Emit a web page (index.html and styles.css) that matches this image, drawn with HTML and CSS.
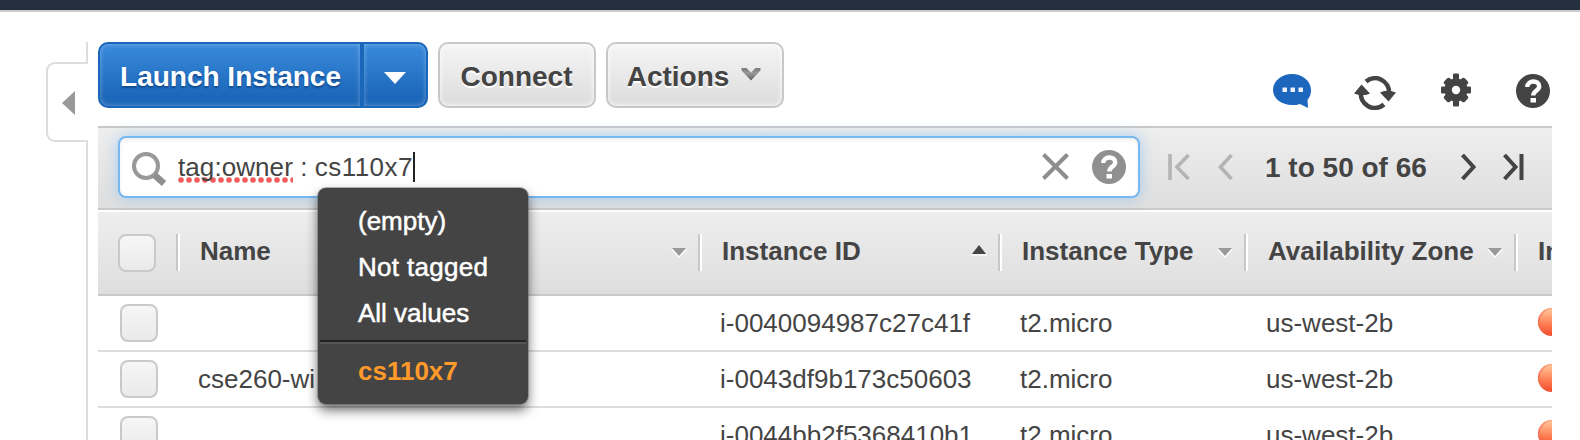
FILE: index.html
```html
<!DOCTYPE html>
<html lang="en">
<head>
<meta charset="utf-8">
<title>Instances</title>
<link rel="stylesheet" href="styles.css">
</head>
<body>
<div class="page">
  <header class="topbar"></header>
  <div class="layout">
    <aside class="side">
      <div class="side-top"></div>
      <div class="side-tab"><svg width="13" height="24" viewBox="0 0 13 24"><path d="M13 0v24L0 12z" fill="#999"/></svg></div>
      <div class="side-rest"></div>
    </aside>
    <main class="main">
      <div class="toolbar">
        <div class="split">
          <button class="btn launch">Launch Instance</button>
          <button class="btn launch-more"><svg width="22" height="12" viewBox="0 0 22 12"><path d="M0 0h22L11 12z" fill="#fff"/></svg></button>
        </div>
        <button class="btn plain connect">Connect</button>
        <button class="btn plain actions">Actions
          <svg width="20" height="14" viewBox="0 0 20 14"><defs><linearGradient id="chev" x1="0" y1="0" x2="0" y2="1"><stop offset="0" stop-color="#777"/><stop offset=".4" stop-color="#999"/><stop offset="1" stop-color="#606060"/></linearGradient></defs><path d="M.5 1h5L10 5.500l4.500-4.500h5v2.500L10 13.500.5 3.500z" fill="url(#chev)"/></svg>
        </button>
        <div class="tools">
          <svg class="t-chat" width="38" height="36" viewBox="0 0 38 36"><path d="M19 1c10.500 0 19 7 19 16 0 4-1 7-3.500 10l.5 8-8-4c-2.500 1-5 1-8 1C8.500 32 0 25.500 0 17 0 8 8.500 1 19 1z" fill="#1c66bd"/><path d="M9.500 14.500h4.500v4.500H9.500zm8 0h4.500v4.500h-4.500zm8 0h4.500v4.500h-4.500z" fill="#fff" opacity=".9"/></svg>
          <svg class="t-refresh" width="42" height="34" viewBox="0 0 42 34"><g fill="none" stroke="#444" stroke-width="4.600"><path d="M12 5.500A14 14 0 0 1 35 17"/><path d="M30 28.500A14 14 0 0 1 7 16"/></g><path d="M26 16.500l4-1.500h7l5 1.500-7.500 9zM0 17.500L7.500 8.500l8.500 9-4 1.500H5z" fill="#444"/></svg>
          <svg class="t-gear" width="30" height="34" viewBox="-15 -17 30 34"><g fill="#444"><circle r="11.500"/><rect x="-3" y="-16.500" width="6" height="33" rx="1"/><rect x="-15" y="-3.500" width="30" height="7" rx="1"/><rect x="-4" y="-14.500" width="8" height="29" rx="2" transform="rotate(45)"/><rect x="-4" y="-14.500" width="8" height="29" rx="2" transform="rotate(-45)"/></g><circle r="4.200" fill="#fff"/></svg>
          <svg class="t-help" width="34" height="34" viewBox="0 0 34 34"><circle cx="17" cy="17" r="17" fill="#444"/><path d="M11.200 13c.2-7.200 12-7.200 12-.8 0 4.500-6 4.600-6 9.300" fill="none" stroke="#fff" stroke-width="4.400"/><path d="M14.500 24h5.500v4.500h-5.500z" fill="#fff"/></svg>
        </div>
      </div>

      <div class="filterbar">
        <div class="search">
          <svg class="s-glass" width="35" height="35" viewBox="0 0 35 35"><circle cx="14" cy="14" r="12" fill="none" stroke="#999" stroke-width="4"/><path d="M22.500 23l9.500 8.500" stroke="#8f8f8f" stroke-width="6.500"/></svg>
          <div class="query"><span class="misspelt">tag:owner</span> : <span class="value">cs110x7</span></div><i class="caret"></i>
          <svg class="s-clear" width="27" height="27" viewBox="0 0 27 27"><path d="M1.500 1.500l24 24M25.500 1.500l-24 24" stroke="#8d8d8d" stroke-width="4"/></svg>
          <svg class="s-help" width="34" height="34" viewBox="0 0 34 34"><circle cx="17" cy="17" r="17" fill="#909090"/><path d="M11.200 13c.2-7.200 12-7.200 12-.8 0 4.500-6 4.600-6 9.300" fill="none" stroke="#fff" stroke-width="4.400"/><path d="M14.500 24h5.500v4.500h-5.500z" fill="#fff"/></svg>
          <ul class="menu">
            <li>(empty)</li>
            <li class="wide">Not tagged</li>
            <li>All values</li>
            <li class="rule"></li>
            <li class="match">cs110x7</li>
          </ul>
        </div>
        <div class="pager">
          <svg class="p-first" width="22" height="26" viewBox="0 0 22 26"><path d="M2 0v26M20.500 1L9 13l11.500 12" fill="none" stroke="#b4b4b4" stroke-width="3.600"/></svg>
          <svg class="p-prev" width="15" height="26" viewBox="0 0 15 26"><path d="M13.500 1L2.500 13l11 12" fill="none" stroke="#b4b4b4" stroke-width="3.600"/></svg>
          <span class="range">1 to 50 of 66</span>
          <svg class="p-next" width="15" height="26" viewBox="0 0 15 26"><path d="M1.500 1l11 12-11 12" fill="none" stroke="#444" stroke-width="4"/></svg>
          <svg class="p-last" width="21" height="26" viewBox="0 0 21 26"><path d="M1.500 1l11 12-11 12M18.500 0v26" fill="none" stroke="#444" stroke-width="4"/></svg>
        </div>
      </div>

      <div class="grid head">
        <div class="pick"><i class="check"></i></div>
        <div class="col">Name<svg class="sort" width="16" height="10" viewBox="0 0 16 10"><path d="M0 1h16L8 10z" fill="#fff"/><path d="M1 0h14L8 8z" fill="#999"/></svg></div>
        <div class="col">Instance ID<svg class="sort up" width="16" height="11" viewBox="0 0 16 11"><path d="M0 9h16v2H0z" fill="#f4f4f4"/><path d="M8 0l7 9H1z" fill="#444"/></svg></div>
        <div class="col">Instance Type<svg class="sort" width="16" height="10" viewBox="0 0 16 10"><path d="M0 1h16L8 10z" fill="#fff"/><path d="M1 0h14L8 8z" fill="#999"/></svg></div>
        <div class="col">Availability Zone<svg class="sort" width="16" height="10" viewBox="0 0 16 10"><path d="M0 1h16L8 10z" fill="#fff"/><path d="M1 0h14L8 8z" fill="#999"/></svg></div>
        <div class="col last">In</div>
      </div>
      <div class="grid row">
        <div class="pick"><i class="check"></i></div>
        <div></div><div>i-0040094987c27c41f</div><div>t2.micro</div><div>us-west-2b</div><div><i class="dot"></i></div>
      </div>
      <div class="grid row">
        <div class="pick"><i class="check"></i></div>
        <div>cse260-wi</div><div>i-0043df9b173c50603</div><div>t2.micro</div><div>us-west-2b</div><div><i class="dot"></i></div>
      </div>
      <div class="grid row">
        <div class="pick"><i class="check"></i></div>
        <div></div><div>i-0044bb2f5368410b1</div><div>t2.micro</div><div>us-west-2b</div><div><i class="dot"></i></div>
      </div>
    </main>
  </div>
</div>
</body>
</html>
```
FILE: styles.css
```css
* { box-sizing: border-box; }
body {
  margin: 0;
  background: #fff;
  color: #444;
  font: 26px/30px "Liberation Sans", Arial, sans-serif;
}
svg { display: block; flex: none; }
.page { width: 1580px; height: 440px; overflow: hidden; }
.topbar { height: 12px; background: #25303e; border-bottom: 2px solid #ccc; }
.layout { display: flex; padding: 30px 0 0 46px; }

/* collapsed side panel */
.side { width: 42px; height: 398px; display: flex; flex-direction: column; flex: none; }
.side-top { height: 20px; border-right: 2px solid #ddd; }
.side-tab {
  height: 80px;
  border: 2px solid #ddd;
  border-right: 0;
  border-radius: 9px 0 0 9px;
  padding: 27px 0 0 14px;
}
.side-rest { flex: 1; border-right: 2px solid #ddd; }

.main { width: 1454px; margin-left: 10px; flex: none; }

/* action buttons */
.toolbar { display: flex; height: 84px; align-items: flex-start; }
.btn {
  height: 66px;
  margin: 0;
  padding: 3px 0 0;
  font: bold 28px/32px "Liberation Sans", Arial, sans-serif;
  display: flex;
  align-items: center;
  justify-content: center;
}
.split { display: flex; }
.launch, .launch-more {
  color: #fff;
  border: 2px solid #1a66b8;
  background: linear-gradient(#398adb, #1c67b9 85%);
  box-shadow: inset 0 0 5px rgba(255, 255, 255, .35);
  text-shadow: 0 2px 2px #124a8c;
}
.launch { width: 264px; border-radius: 10px 0 0 10px; padding-left: 1px; }
.launch-more { width: 66px; border-radius: 0 10px 10px 0; padding-top: 6px; }
.plain {
  color: #444;
  border: 2px solid #c8c8c8;
  border-radius: 10px;
  background: linear-gradient(#f5f5f5, #dfdfdf 90%);
  box-shadow: inset 0 0 5px #fff;
  text-shadow: 0 2px 0 #fff;
}
.connect { width: 158px; margin-left: 10px; padding-right: 1px; }
.actions { width: 178px; margin-left: 10px; gap: 12px; padding-right: 2px; }
.actions svg { margin-top: -5px; }
.tools { display: flex; margin: 31px 0 0 auto; padding-right: 2px; }
.t-refresh { margin: 3px 0 0 43px; }
.t-gear { margin-left: 45px; }
.t-help { margin: 1px 0 0 45px; }

/* filter and paging */
.filterbar {
  display: flex;
  height: 84px;
  padding: 8px 0 0 20px;
  border-top: 2px solid #c9c9c9;
  border-bottom: 2px solid #c9c9c9;
  background: linear-gradient(#eee, #dedede);
}
.search {
  position: relative;
  z-index: 2;
  width: 1022px;
  height: 62px;
  display: flex;
  align-items: flex-start;
  border: 2px solid #76b8ef;
  border-radius: 8px;
  background: #fff;
  box-shadow: 0 0 14px rgba(105, 180, 245, .55), inset 0 2px 4px #eee;
}
.s-glass { margin: 14px 0 0 12px; }
.query { margin: 14px 0 0 11px; white-space: pre; letter-spacing: .08px; }
.value { letter-spacing: .45px; }
.misspelt {
  display: inline-block;
  height: 31px;
  background: radial-gradient(circle at 3px 3px, #f55b5b 2.200px, rgba(255, 100, 100, 0) 3.400px) 0 bottom / 8px 6px repeat-x;
}
.caret { width: 2px; height: 30px; margin: 14px 0 0 0; background: #222; }
.s-clear { margin: 15px 0 0 auto; }
.s-help { margin: 12px 12px 0 23px; }
.menu {
  position: absolute;
  left: 198px;
  top: 50px;
  width: 210px;
  height: 216px;
  margin: 0;
  padding: 18px 0 0;
  list-style: none;
  color: #fff;
  background: #444;
  border-radius: 8px;
  box-shadow: 0 0 0 1px rgba(110, 110, 110, .5), 0 6px 12px rgba(0, 0, 0, .6);
}
.menu li { height: 46px; padding-left: 40px; -webkit-text-stroke: .5px #fff; }
.menu .wide { letter-spacing: .3px; }
.menu .rule { height: 4px; margin: -4px 2px 0; padding: 0; border-top: 2px solid #222; background: #555; }
.menu .match { padding-top: 12px; color: #ff9a2b; font-weight: bold; -webkit-text-stroke: 0; }
.pager { display: flex; margin: 18px 0 0 28px; font: bold 28px/28px "Liberation Sans", Arial, sans-serif; }
.p-prev { margin-left: 28px; }
.range { width: 164px; margin: 0 0 0 32px; white-space: nowrap; }
.p-next { margin-left: 32px; }
.p-last { margin-left: 27px; }

/* instance table */
.grid { display: grid; grid-template-columns: 78px 522px 300px 246px 270px 38px; overflow: hidden; }
.head {
  height: 86px;
  padding-top: 24px;
  border-top: 2px solid #fff;
  border-bottom: 2px solid #c9c9c9;
  background: linear-gradient(#eee, #dedede);
  font-weight: bold;
}
.col {
  height: 37px;
  margin-top: -2px;
  padding: 2px 11px 0 22px;
  display: flex;
  justify-content: space-between;
  white-space: nowrap;
  border-left: 2px solid #c8c8c8;
  box-shadow: inset 2px 0 #fff;
}
.col.last { padding-right: 0; overflow: hidden; }
.sort { margin-top: 12px; }
.sort.up { margin-top: 9px; }
.row { height: 56px; border-bottom: 2px solid #ddd; white-space: nowrap; line-height: 54px; }
.row > div:nth-child(n+2) { padding-left: 22px; }
.row > div:nth-child(6) { padding-left: 24px; }
.check {
  display: block;
  width: 38px;
  height: 38px;
  margin-left: 20px;
  border: 2px solid #c9c9c9;
  border-radius: 8px;
  background: linear-gradient(#f6f6f6, #eaeaea);
}
.head .check { margin-top: -2px; }
.row .check { margin: 8px 0 0 22px; }
.dot {
  display: block;
  width: 28px;
  height: 28px;
  margin-top: 12px;
  border-radius: 50%;
  background: linear-gradient(#ffcb9c, #fd7a50 60%, #f04a2c);
  box-shadow: inset 1px 0 2px #ef694c;
}
```
